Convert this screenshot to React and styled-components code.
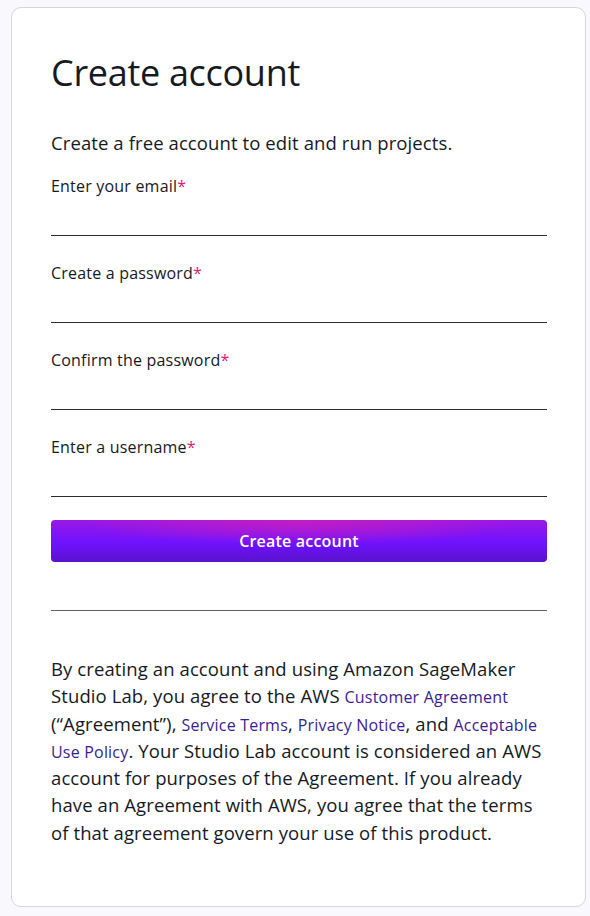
import React from 'react';
import styled, { createGlobalStyle } from 'styled-components';

const GlobalStyle = createGlobalStyle`
  html, body {
    margin: 0;
    padding: 0;
    background: #f8f8fd;
    font-family: "Open Sans", "Noto Sans", sans-serif;
    color: #16191f;
  }
`;

const Page = styled.div`
  padding: 7px 4px 9px 11px;
`;

const Card = styled.div`
  background: #ffffff;
  border: 1px solid #d5d5db;
  border-radius: 10px;
  padding: 41px 38px 60px 39px;
`;

const Title = styled.h1`
  margin: 0;
  font-size: 36px;
  font-weight: 400;
  line-height: 48px;
  letter-spacing: -0.3px;
`;

const Intro = styled.p`
  margin: 33px 0 0;
  font-size: 18.5px;
  line-height: 26px;
  letter-spacing: 0.1px;
`;

const Form = styled.form`
  display: flex;
  flex-direction: column;
  gap: 25px;
  margin-top: 18px;
`;

const Field = styled.label`
  display: flex;
  flex-direction: column;
  font-size: 16px;
  line-height: 24px;
  letter-spacing: 0.2px;
`;

const Required = styled.span`
  color: #d6246e;
`;

const Input = styled.input`
  box-sizing: border-box;
  border: none;
  border-bottom: 1px solid #2b2b38;
  outline: none;
  height: 38px;
  padding: 0;
  font: inherit;
  background: transparent;
`;

const Button = styled.button`
  margin-top: -2px;
  height: 42px;
  border: none;
  border-radius: 4px;
  color: #ffffff;
  font-family: inherit;
  font-size: 16px;
  font-weight: 600;
  letter-spacing: 0.2px;
  background:
    radial-gradient(ellipse 45% 60% at 50% 0%, rgba(200, 30, 190, 0.9), rgba(200, 30, 190, 0) 100%),
    linear-gradient(180deg, #9a18e6 0%, #6e12ff 55%, #5a12cc 100%);
`;

const Divider = styled.hr`
  margin: 48px 0 0;
  border: none;
  border-top: 1px solid #5f5f6b;
`;

const Legal = styled.p`
  margin: 44px 0 0;
  font-size: 18.5px;
  line-height: 27.3px;
  letter-spacing: 0.1px;
`;

const Link = styled.a`
  color: #3a1d91;
  font-size: 16px;
  line-height: 18px;
  letter-spacing: 0.2px;
  text-decoration: none;
`;

const fields = [
  'Enter your email',
  'Create a password',
  'Confirm the password',
  'Enter a username',
];

export default function App() {
  return (
    <>
      <GlobalStyle />
      <Page>
        <Card>
          <Title>Create account</Title>
          <Intro>Create a free account to edit and run projects.</Intro>
          <Form onSubmit={(e) => e.preventDefault()}>
            {fields.map((f) => (
              <Field key={f}>
                <span>
                  {f}
                  <Required>*</Required>
                </span>
                <Input type={f.includes('password') ? 'password' : 'text'} />
              </Field>
            ))}
            <Button type="submit">Create account</Button>
          </Form>
          <Divider />
          <Legal>
            By creating an account and using Amazon SageMaker Studio Lab, you agree to the AWS{' '}
            <Link href="#">Customer Agreement</Link> (“Agreement”),{' '}
            <Link href="#">Service Terms</Link>, <Link href="#">Privacy Notice</Link>, and{' '}
            <Link href="#">Acceptable Use Policy</Link>. Your Studio Lab account is considered an AWS
            account for purposes of the Agreement. If you already have an Agreement with AWS, you
            agree that the terms of that agreement govern your use of this product.
          </Legal>
        </Card>
      </Page>
    </>
  );
}
